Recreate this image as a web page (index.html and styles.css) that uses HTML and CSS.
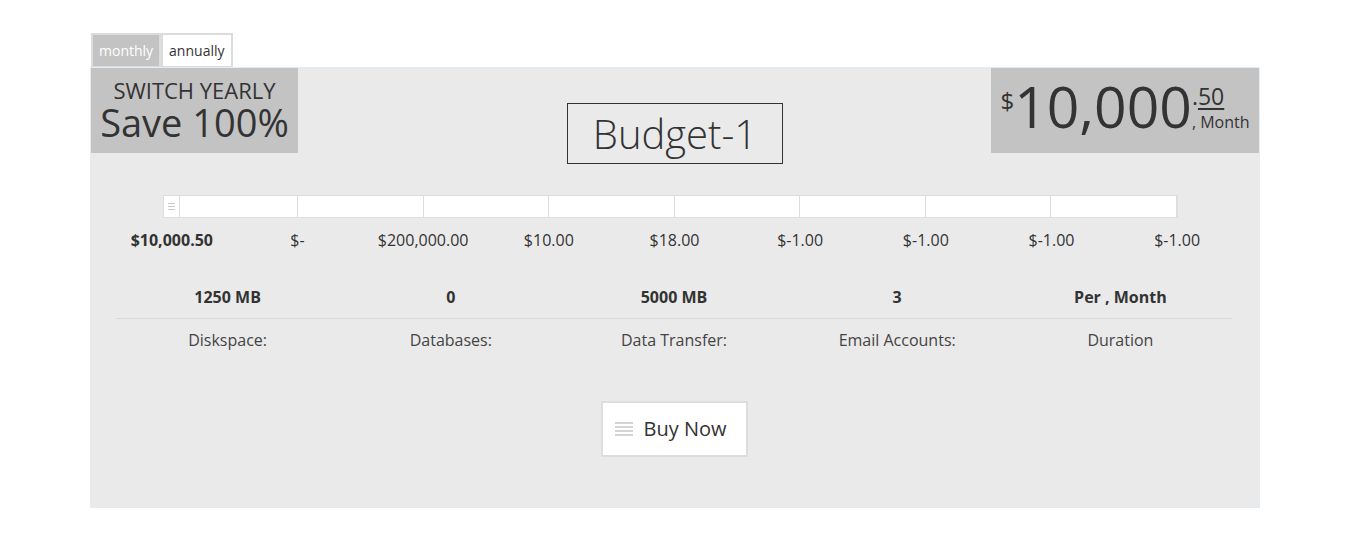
FILE: index.html
```html
<!DOCTYPE html>
<html>
<head>
<meta charset="utf-8">
<link rel="stylesheet" href="styles.css">
</head>
<body>
<div class="wrap">
  <div class="tabs">
    <span class="tab tab-active">monthly</span>
    <span class="tab">annually</span>
  </div>
  <div class="panel">
    <div class="top">
      <div class="promo">
        <div class="promo-small">SWITCH YEARLY</div>
        <div class="promo-big">Save 100%</div>
      </div>
      <div class="title">Budget-1</div>
      <div class="price">
        <span class="cur">$</span>
        <span class="amount">10,000</span>
        <span class="tail">
          <span class="cents">.<u>50</u></span>
          <span class="per">, Month</span>
        </span>
      </div>
    </div>

    <div class="slider">
      <div class="seg"></div><div class="seg"></div><div class="seg"></div><div class="seg"></div>
      <div class="seg"></div><div class="seg"></div><div class="seg"></div><div class="seg"></div>
      <div class="handle"><span></span><span></span><span></span></div>
    </div>

    <div class="ticks">
      <span class="tick tick-bold">$10,000.50</span>
      <span class="tick">$-</span>
      <span class="tick">$200,000.00</span>
      <span class="tick">$10.00</span>
      <span class="tick">$18.00</span>
      <span class="tick">$-1.00</span>
      <span class="tick">$-1.00</span>
      <span class="tick">$-1.00</span>
      <span class="tick">$-1.00</span>
    </div>

    <div class="features">
      <div class="values">
        <span>1250 MB</span><span>0</span><span>5000 MB</span><span>3</span><span>Per , Month</span>
      </div>
      <div class="labels">
        <span>Diskspace:</span><span>Databases:</span><span>Data Transfer:</span><span>Email Accounts:</span><span>Duration</span>
      </div>
    </div>

    <div class="buy-row">
      <button class="buy">
        <span class="buy-icon"><i></i><i></i><i></i><i></i></span>
        <span>Buy Now</span>
      </button>
    </div>
  </div>
</div>
</body>
</html>
```

FILE: styles.css
```css
* { box-sizing: border-box; }

body {
  margin: 0;
  background: #fff;
  font-family: "Open Sans", "Liberation Sans", sans-serif;
  color: #333;
}

.wrap {
  padding-top: 33px;
  margin-left: 90px;
  width: 1170px;
}

.tabs {
  display: flex;
  width: fit-content;
  margin-left: 1px;
  background: #dcdcdc;
  padding: 2px 2px 1px 2px;
  gap: 4px;
}

.tab {
  display: block;
  padding: 0 6px;
  line-height: 31px;
  font-size: 14px;
  background: #fff;
  color: #333;
}

.tab-active {
  background: #c3c3c3;
  color: #fff;
}

.panel {
  border: 1px solid #e2ecf5;
  background: #eaeaea;
  padding-bottom: 50px;
}

.top {
  display: grid;
  grid-template-columns: 1fr auto 1fr;
  align-items: start;
}

.promo {
  justify-self: start;
  width: 207px;
  height: 85px;
  background: #c3c3c3;
  text-align: center;
  padding-top: 10px;
}

.promo-small {
  font-size: 22px;
  line-height: 25px;
}

.promo-big {
  font-size: 38px;
  line-height: 39px;
}

.title {
  margin-top: 35px;
  border: 1px solid #333;
  padding: 0 25px;
  font-size: 40px;
  font-weight: 300;
  line-height: 59px;
}

.price {
  justify-self: end;
  width: 268px;
  height: 85px;
  background: #c3c3c3;
  display: flex;
  justify-content: center;
  align-items: flex-start;
  padding-top: 10px;
}

.cur {
  font-size: 24px;
  line-height: 24px;
  margin-top: 11px;
}

.amount {
  font-size: 57px;
  line-height: 57px;
}

.tail {
  display: flex;
  flex-direction: column;
  margin-top: 6px;
}

.cents {
  font-size: 23px;
  line-height: 25px;
}

.cents u {
  text-decoration-thickness: 2px;
  text-underline-offset: 3px;
}

.per {
  font-size: 16px;
  line-height: 18px;
  margin-top: 4px;
}

.slider {
  position: relative;
  margin: 31px 81px 0 72px;
  height: 23px;
  background: #fff;
  border: 1px solid #dddddd;
  display: grid;
  grid-template-columns: 134px repeat(7, 1fr);
}

.seg {
  border-right: 1px solid #dddddd;
}

.seg:last-of-type {
  border-right: none;
}

.handle {
  position: absolute;
  left: -1px;
  top: -1px;
  width: 17px;
  height: 23px;
  background: #fff;
  border: 1px solid #dddddd;
  display: flex;
  flex-direction: column;
  justify-content: center;
  align-items: center;
  gap: 2px;
}

.handle span {
  display: block;
  width: 7px;
  height: 1px;
  background: #c8c8c8;
}

.ticks {
  display: grid;
  grid-template-columns: repeat(9, 1fr);
  margin: 12px 19px 0 18px;
  text-align: center;
  font-size: 16px;
  line-height: 20px;
}

.tick-bold {
  font-weight: 700;
}

.features {
  margin: 36px 27px 0 25px;
  font-size: 16px;
  line-height: 22px;
}

.values,
.labels {
  display: grid;
  grid-template-columns: repeat(5, 1fr);
  text-align: center;
}

.values {
  font-weight: 700;
  padding-bottom: 10px;
  border-bottom: 1px solid #d9d9d9;
}

.labels {
  margin-top: 10px;
  color: #444;
}

.buy-row {
  display: flex;
  justify-content: center;
  margin-top: 50px;
}

.buy {
  display: flex;
  align-items: center;
  gap: 11px;
  height: 56px;
  padding: 0 19px 0 12px;
  background: #fff;
  border: 2px solid #dddddd;
  font-family: "Open Sans", "Liberation Sans", sans-serif;
  font-size: 20px;
  color: #333;
  line-height: 52px;
  margin-right: 2px;
}

.buy-icon {
  display: flex;
  flex-direction: column;
  gap: 2px;
  width: 18px;
}

.buy-icon i {
  display: block;
  height: 2px;
  background: #d4d4d4;
}
```
